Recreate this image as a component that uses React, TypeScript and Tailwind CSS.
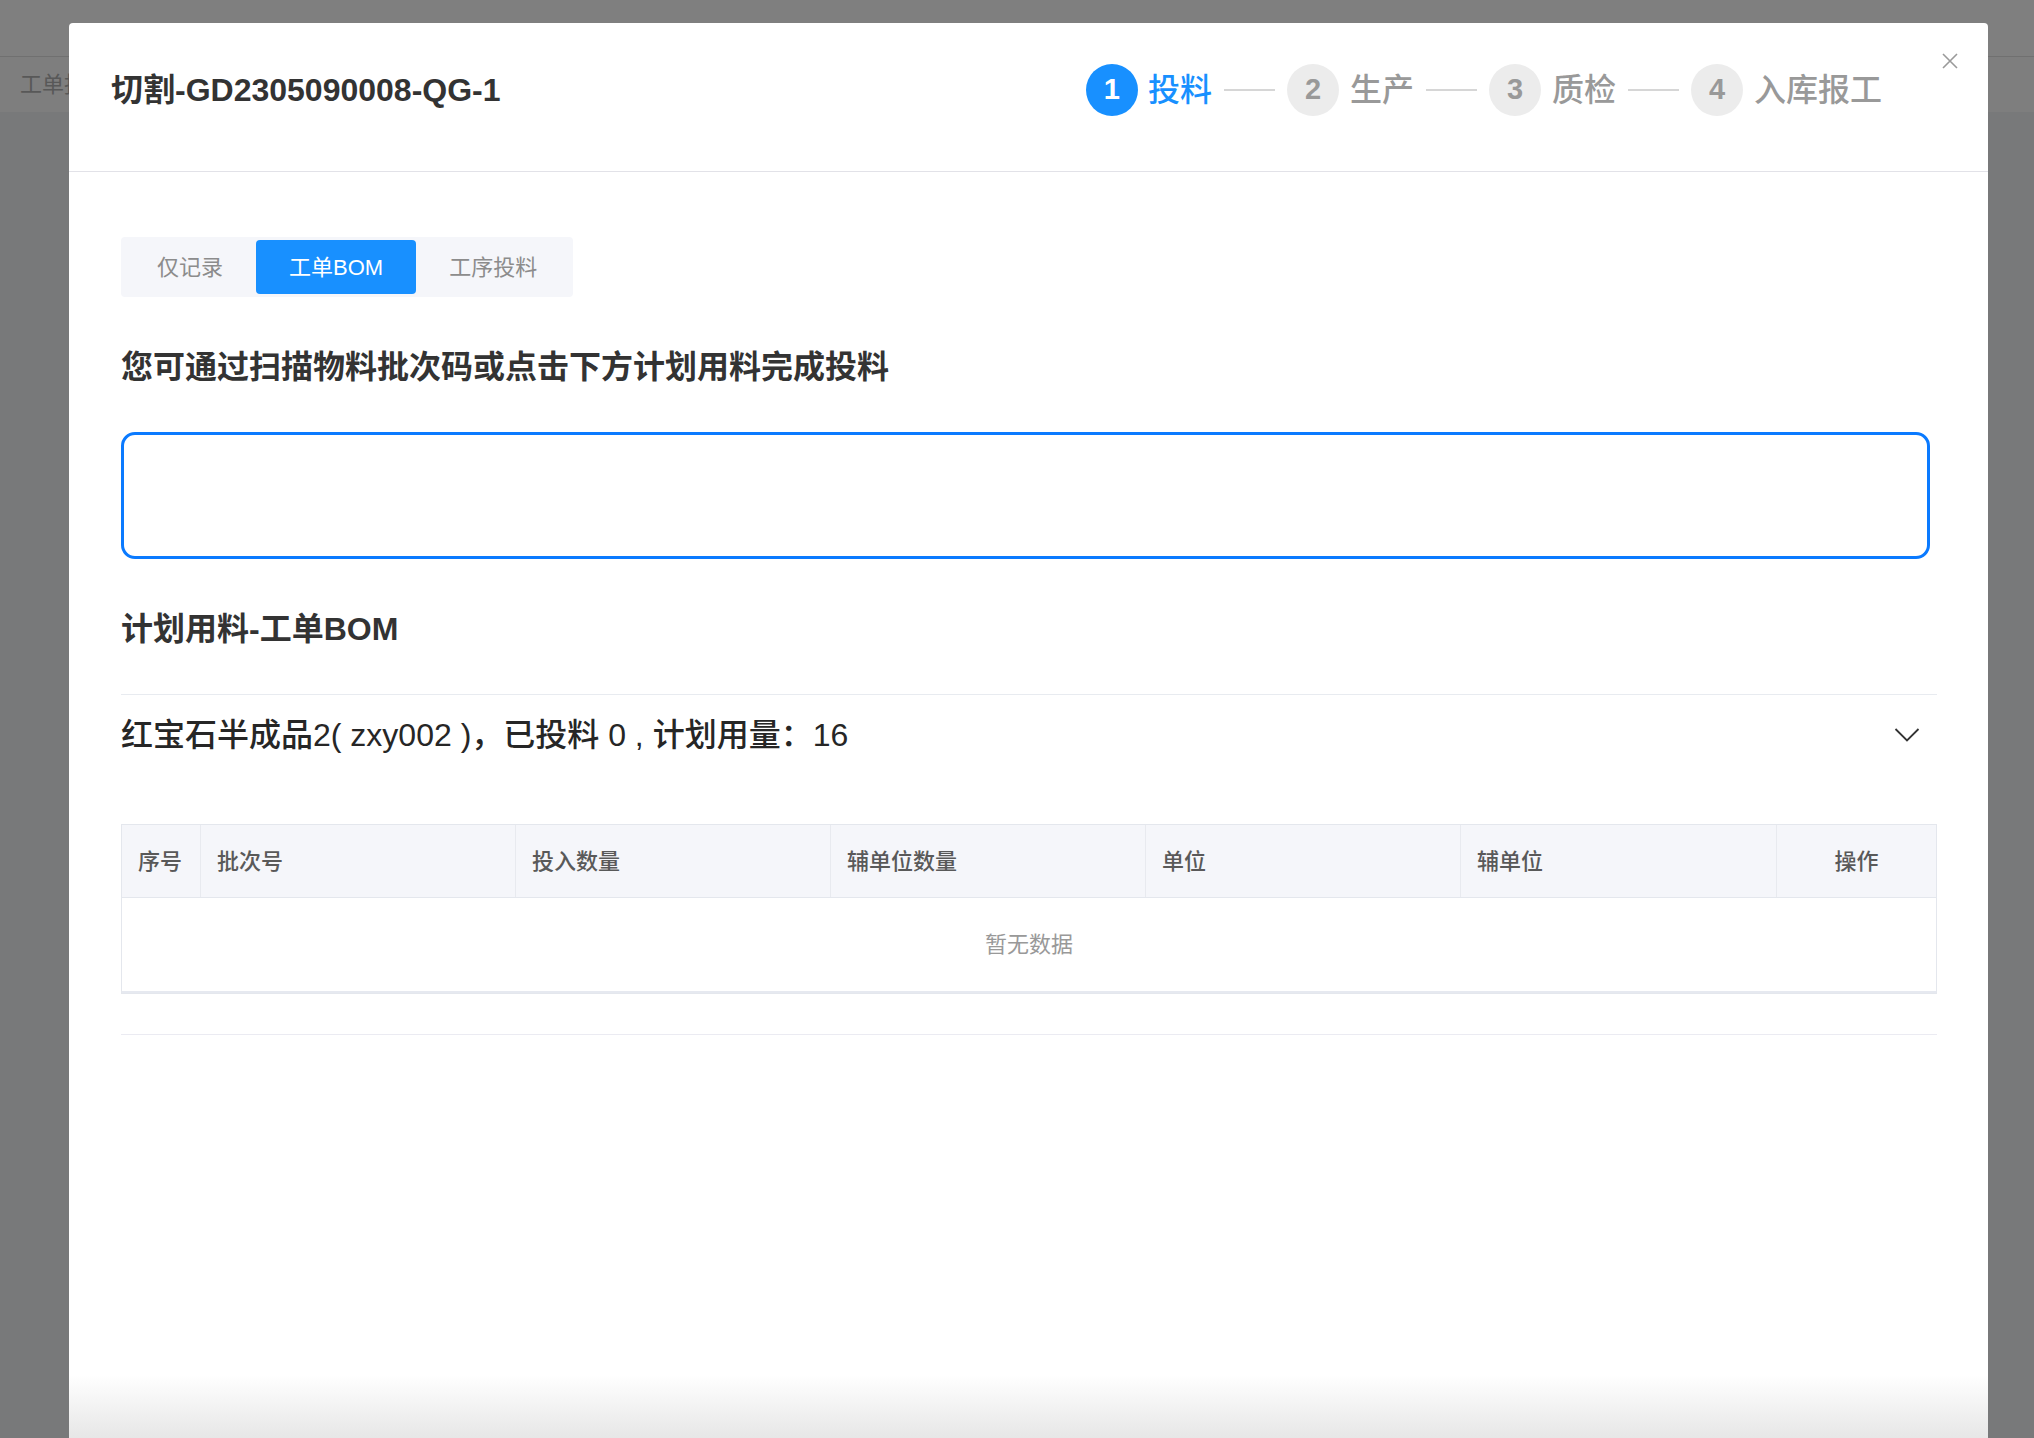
import React from "react";

const FONT = {
  fontFamily: '"Liberation Sans", "Noto Sans CJK SC", sans-serif',
};

const steps = [
  { n: 1, label: "投料", active: true },
  { n: 2, label: "生产", active: false },
  { n: 3, label: "质检", active: false },
  { n: 4, label: "入库报工", active: false },
];

const columns = [
  { title: "序号", w: "w-[79px]", center: false },
  { title: "批次号", w: "w-[315px]", center: false },
  { title: "投入数量", w: "w-[315px]", center: false },
  { title: "辅单位数量", w: "w-[315px]", center: false },
  { title: "单位", w: "w-[315px]", center: false },
  { title: "辅单位", w: "w-[316px]", center: false },
  { title: "操作", w: "flex-1", center: true },
];

function Steps() {
  return (
    <div className="flex items-center">
      {steps.map((s, i) => (
        <div key={s.n} className="flex items-center">
          {i > 0 && <div className="mx-[12px] h-[2px] w-[51px] bg-[#d6d6d6]" />}
          <div
            className={
              s.active
                ? "flex h-[52px] w-[52px] items-center justify-center rounded-full bg-[#1890ff] text-[29px] font-bold text-white"
                : "flex h-[52px] w-[52px] items-center justify-center rounded-full bg-[#ececec] text-[29px] font-bold text-[#999999]"
            }
          >
            {s.n}
          </div>
          <div
            className={
              s.active
                ? "ml-[10px] text-[32px] font-medium leading-none text-[#1890ff]"
                : "ml-[11px] text-[32px] font-medium leading-none text-[#999999]"
            }
          >
            {s.label}
          </div>
        </div>
      ))}
    </div>
  );
}

function ModeTabs() {
  return (
    <div className="inline-flex rounded-[4px] bg-[#f5f6fa] p-[3px]">
      <div className="flex h-[54px] items-center px-[33px] text-[22px] text-[#8c8c8c]">仅记录</div>
      <div className="flex h-[54px] items-center rounded-[4px] bg-[#1890ff] px-[33px] text-[22px] text-white">
        工单BOM
      </div>
      <div className="flex h-[54px] items-center px-[33px] text-[22px] text-[#8c8c8c]">工序投料</div>
    </div>
  );
}

function BomTable() {
  return (
    <div className="mt-[65px] border border-[#e4e7ed]">
      <div className="flex h-[73px] bg-[#f5f6fa] border-b border-[#e4e7ed]">
        {columns.map((c, i) => (
          <div
            key={c.title}
            className={`${c.w} flex items-center px-[16px] text-[22px] font-medium text-[#595959] ${
              c.center ? "justify-center" : ""
            } ${i < columns.length - 1 ? "border-r border-[#e8eaef]" : ""}`}
          >
            {c.title}
          </div>
        ))}
      </div>
      <div className="flex h-[95px] items-center justify-center border-b-2 border-[#e6e9f0] text-[22px] text-[#999999]">
        暂无数据
      </div>
    </div>
  );
}

export default function App() {
  return (
    <div className="relative h-[1438px] w-[2034px] overflow-hidden bg-[#78797a]" style={FONT}>
      {/* page behind the mask */}
      <div className="h-[57px] border-b border-[#707070] bg-[#7f7f7f]" />
      <div className="flex h-[55px] items-center bg-[#7e7e7e] pl-[20px] text-[22px] text-[#585858]">
        工单报工
      </div>

      {/* modal */}
      <div className="absolute left-[69px] top-[23px] flex h-[1430px] w-[1919px] flex-col rounded-t-[4px] bg-white">
        <div className="relative h-[149px] shrink-0 border-b border-[#e2e2e8]">
          <div className="mt-[41px] flex h-[52px] items-center pl-[42px] pr-[106px]">
            <div className="text-[32px] font-bold text-[#333333]">切割-GD2305090008-QG-1</div>
            <div className="ml-auto">
              <Steps />
            </div>
          </div>
          <button className="absolute left-[1873px] top-[30px] flex h-[16px] w-[16px] items-center justify-center">
            <svg width="16" height="16" viewBox="0 0 16 16" fill="none">
              <path d="M1 1L15 15M15 1L1 15" stroke="#9a9a9a" strokeWidth="1.6" />
            </svg>
          </button>
        </div>

        <div className="flex flex-1 flex-col pl-[52px] pr-[51px] pt-[65px]">
          <div>
            <ModeTabs />
          </div>
          <div className="mt-[46px] text-[32px] font-bold leading-[48px] text-[#333333]">
            您可通过扫描物料批次码或点击下方计划用料完成投料
          </div>
          <div className="mr-[7px] mt-[41px] h-[127px] rounded-[14px] border-[3px] border-[#0a7aff]" />
          <div className="mt-[46px] text-[32px] font-bold leading-[48px] text-[#333333]">计划用料-工单BOM</div>

          <div className="mt-[41px] border-t border-[#e8ebf0]">
            <div className="flex items-center pt-[16px]">
              <div className="text-[32px] font-medium leading-[48px] text-[#262626]">
                红宝石半成品2( zxy002 )，已投料 0 , 计划用量：16
              </div>
              <svg className="ml-auto mr-[17px]" width="26" height="16" viewBox="0 0 26 16" fill="none">
                <path d="M1.5 2L13 13.5L24.5 2" stroke="#333333" strokeWidth="1.8" />
              </svg>
            </div>
            <BomTable />
            <div className="mt-[40px] border-t border-[#ebebf2]" />
          </div>
        </div>

        {/* fade at the bottom edge */}
        <div className="pointer-events-none absolute bottom-[8px] left-0 right-0 h-[70px] bg-gradient-to-b from-white to-[#e4e4e4]" />
      </div>
    </div>
  );
}
